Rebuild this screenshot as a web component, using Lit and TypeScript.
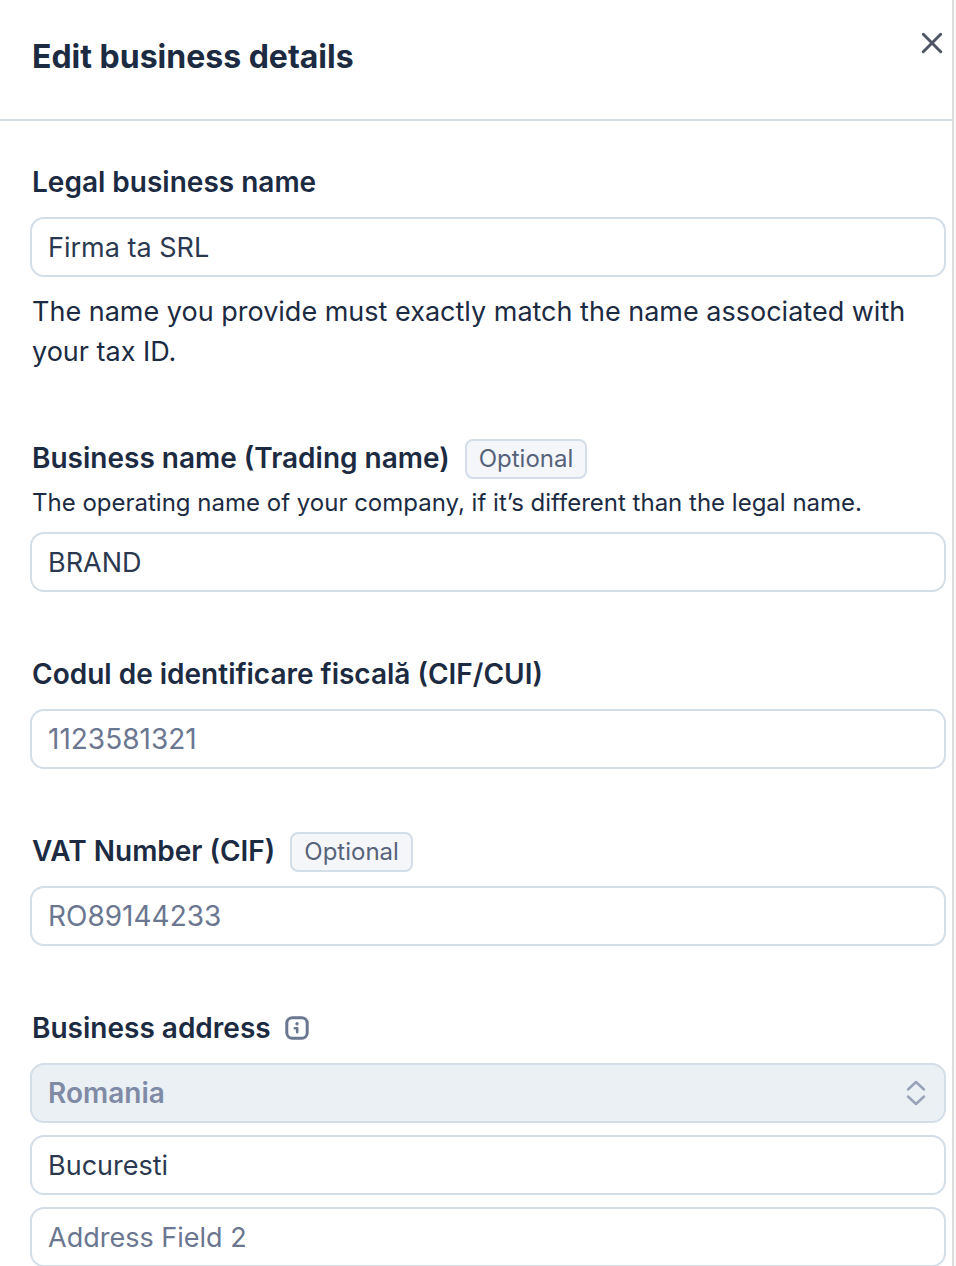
import { LitElement, html, css } from 'lit';
import { customElement } from 'lit/decorators.js';

@customElement('app-root')
export class AppRoot extends LitElement {
  static styles = css`
    :host {
      display: block;
      height: 100vh;
      overflow: hidden;
      background: #fafafa;
      color: #1c2b42;
      font-family: Inter, 'Liberation Sans', sans-serif;
      font-size: 28px;
      line-height: 40px;
    }
    * { box-sizing: border-box; }
    .panel {
      min-height: 100%;
      margin-right: 2px;
      border-right: 2px solid #dcdcdc;
      background: #fff;
    }
    .head {
      display: flex;
      justify-content: space-between;
      align-items: flex-start;
      height: 121px;
      padding: 28px 5px 0 32px;
      border-bottom: 2px solid #d4dee8;
    }
    h1 { margin: 8px 0 0; font-size: 32px; line-height: 42px; font-weight: 700; }
    .close {
      display: flex;
      padding: 0;
      border: 0;
      background: none;
      color: #4f5666;
    }
    .form {
      display: flex;
      flex-direction: column;
      gap: 63px;
      padding: 42px 6px 0 30px;
    }
    .row {
      display: flex;
      align-items: flex-start;
      height: 40px;
      margin-bottom: 14px;
      padding-left: 2px;
    }
    .row.tight { margin-bottom: 6px; }
    .label { font-weight: 600; line-height: 39px; }
    .badge {
      margin-left: 15px;
      padding: 0 12px;
      border: 2px solid #d4dee8;
      border-radius: 8px;
      background: #f5f6fa;
      color: #56637a;
      font-size: 24px;
      line-height: 36px;
    }
    .hint { margin: 15px 0 4px; padding-left: 2px; font-size: 27px; }
    .desc { margin: 0 0 11px; padding-left: 2px; font-size: 24px; line-height: 36px; }
    .control {
      display: block;
      width: 100%;
      height: 60px;
      margin: 0;
      padding: 0 16px;
      border: 2px solid #d4dee8;
      border-radius: 14px;
      background: #fff;
      color: #2b3950;
      font: inherit;
      font-size: 27px;
      appearance: none;
      outline: none;
    }
    .control.code { font-size: 28px; }
    .control::placeholder { color: #6b7690; opacity: 1; }
    .select {
      background: #ebf0f5;
      color: #7f8ba5;
      font-size: 28px;
      font-weight: 600;
      opacity: 1;
    }
    .picker { position: relative; }
    .arrows { position: absolute; right: 18px; top: 17px; pointer-events: none; }
    .info { margin: 7px 0 0 14px; display: flex; }
    .stack { display: flex; flex-direction: column; gap: 12px; }
  `;

  render() {
    return html`
      <main class="panel">
        <header class="head">
          <h1>Edit business details</h1>
          <button class="close" aria-label="Close">
            <svg width="30" height="30" viewBox="0 0 30 30" fill="none" stroke="currentColor" stroke-width="3" stroke-linecap="round">
              <path d="M6.3 6.3L23.7 23.7M23.7 6.3L6.3 23.7" />
            </svg>
          </button>
        </header>
        <form class="form">
          <div class="field">
            <div class="row"><label class="label" for="legal">Legal business name</label></div>
            <input class="control" id="legal" value="Firma ta SRL" aria-describedby="legal-hint" />
            <p class="hint" id="legal-hint">The name you provide must exactly match the name associated with your tax ID.</p>
          </div>
          <div class="field">
            <div class="row tight">
              <label class="label" for="trading">Business name (Trading name)</label>
              <span class="badge">Optional</span>
            </div>
            <p class="desc" id="trading-desc">The operating name of your company, if it’s different than the legal name.</p>
            <input class="control" id="trading" value="BRAND" aria-describedby="trading-desc" />
          </div>
          <div class="field">
            <div class="row"><label class="label" for="cif">Codul de identificare fiscală (CIF/CUI)</label></div>
            <input class="control code" id="cif" placeholder="1123581321" />
          </div>
          <div class="field">
            <div class="row">
              <label class="label" for="vat">VAT Number (CIF)</label>
              <span class="badge">Optional</span>
            </div>
            <input class="control code" id="vat" placeholder="RO89144233" />
          </div>
          <div class="field">
            <div class="row">
              <label class="label" for="country">Business address</label>
              <span class="info">
                <svg width="24" height="24" viewBox="0 0 24 24" fill="none" stroke="#6b7690" stroke-width="3">
                  <rect x="1.8" y="1.8" width="20.4" height="20.4" rx="5.5" />
                  <path d="M9.8 12.2H12.2V16.2" stroke-width="2.6" stroke-linecap="round" stroke-linejoin="round" />
                  <circle cx="12" cy="7.8" r="1.7" fill="#6b7690" stroke="none" />
                </svg>
              </span>
            </div>
            <div class="stack">
              <div class="picker">
                <select class="control select" id="country" disabled><option>Romania</option></select>
                <svg class="arrows" width="24" height="26" viewBox="0 0 24 26" fill="none" stroke="#98a2b8" stroke-width="2.5" stroke-linecap="round" stroke-linejoin="round">
                  <path d="M4 9.5L12 2L20 9.5M4 16.5L12 24L20 16.5" />
                </svg>
              </div>
              <input class="control" aria-label="Address Field 1" value="Bucuresti" />
              <input class="control" aria-label="Address Field 2" placeholder="Address Field 2" />
            </div>
          </div>
        </form>
      </main>
    `;
  }
}
